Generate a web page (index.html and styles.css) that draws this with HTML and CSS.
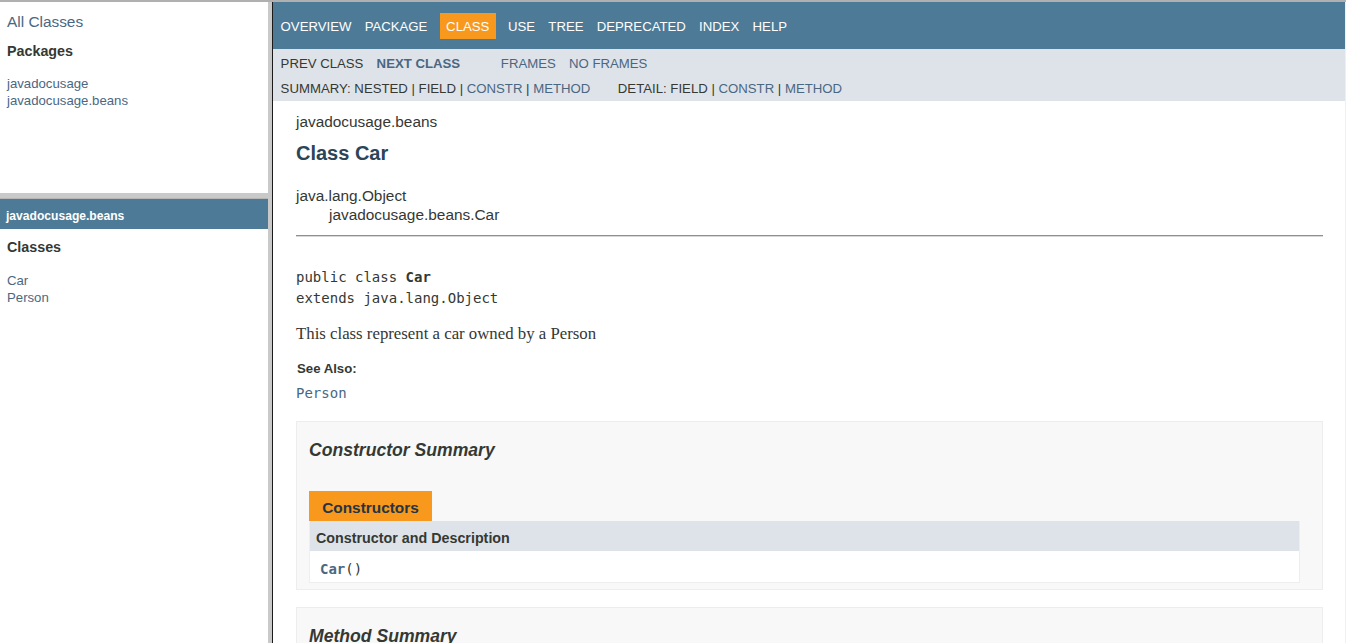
FILE: index.html
```html
<!DOCTYPE html>
<html lang="en">
<head>
<meta charset="utf-8">
<title>Car</title>
<link rel="stylesheet" href="styles.css">
</head>
<body>
<div class="frames">
  <div class="side">
    <div class="pane pane-top">
      <div class="index-header"><a href="#">All&nbsp;Classes</a></div>
      <div class="index-container">
        <h2 class="index-title">Packages</h2>
        <ul class="index-list">
          <li><a href="#">javadocusage</a></li>
          <li><a href="#">javadocusage.beans</a></li>
        </ul>
      </div>
    </div>
    <div class="hsep"></div>
    <div class="pane pane-bottom">
      <h1 class="pkg-bar"><a href="#">javadocusage.beans</a></h1>
      <div class="index-container">
        <h2 class="index-title index-title-classes">Classes</h2>
        <ul class="index-list index-list-classes">
          <li><a href="#">Car</a></li>
          <li><a href="#">Person</a></li>
        </ul>
      </div>
    </div>
  </div>
  <div class="vsep"></div>
  <div class="main">
    <div class="top-nav">
      <ul class="nav-list">
        <li><a href="#">Overview</a></li>
        <li><a href="#">Package</a></li>
        <li class="nav-active">Class</li>
        <li><a href="#">Use</a></li>
        <li><a href="#">Tree</a></li>
        <li><a href="#">Deprecated</a></li>
        <li><a href="#">Index</a></li>
        <li><a href="#">Help</a></li>
      </ul>
    </div>
    <div class="sub-nav">
      <div class="sub-row">
        <ul class="sub-list">
          <li>Prev&nbsp;Class</li>
          <li><a href="#" class="strong">Next&nbsp;Class</a></li>
        </ul>
        <ul class="sub-list">
          <li><a href="#">Frames</a></li>
          <li><a href="#">No&nbsp;Frames</a></li>
        </ul>
      </div>
      <div class="sub-row sub-row-2">
        <ul class="sub-inline">
          <li>Summary:&nbsp;Nested&nbsp;|&nbsp;Field&nbsp;|&nbsp;<a href="#">Constr</a>&nbsp;|&nbsp;<a href="#">Method</a></li>
        </ul>
        <ul class="sub-inline">
          <li>Detail:&nbsp;Field&nbsp;|&nbsp;<a href="#">Constr</a>&nbsp;|&nbsp;<a href="#">Method</a></li>
        </ul>
      </div>
    </div>
    <div class="content">
      <div class="sub-title">javadocusage.beans</div>
      <h1 class="title">Class Car</h1>
      <ul class="inheritance">
        <li>java.lang.Object</li>
        <li class="inherit-child">javadocusage.beans.Car</li>
      </ul>
      <hr class="rule">
      <pre class="signature">public class <b>Car</b>
extends java.lang.Object</pre>
      <div class="block">This class represent a car owned by a Person</div>
      <dl class="see-also">
        <dt>See Also:</dt>
        <dd><a href="#" class="mono">Person</a></dd>
      </dl>
      <section class="summary-block">
        <h3 class="summary-title">Constructor Summary</h3>
        <div class="tab">Constructors</div>
        <div class="member-table">
          <div class="member-head">Constructor and Description</div>
          <div class="member-row"><code class="mono"><a href="#" class="strong">Car</a>()</code></div>
        </div>
      </section>
      <section class="summary-block">
        <h3 class="summary-title">Method Summary</h3>
      </section>
    </div>
  </div>
</div>
</body>
</html>
```

FILE: styles.css
```css
* { box-sizing: border-box; }
html, body {
  margin: 0;
  padding: 0;
  height: 100%;
  overflow: hidden;
  background: #ffffff;
}
body {
  font-family: "Liberation Sans", Arial, sans-serif;
  color: #353833;
  font-size: 15.4px;
  border-top: 2px solid #b0b0b0;
}
a { color: #4A6782; text-decoration: none; }
ul { list-style: none; margin: 0; padding: 0; }

.frames {
  display: flex;
  height: 100%;
}

/* left frames */
.side {
  width: 268px;
  flex: none;
  display: flex;
  flex-direction: column;
}
.pane-top {
  height: 191px;
  flex: none;
  padding-top: 11px;
}
.hsep {
  height: 6px;
  flex: none;
  background: #c9c9c9;
  border-bottom: 1px solid #b5b5b5;
}
.pane-bottom { flex: 1; }
.index-header {
  padding: 0 7px;
  font-size: 15.4px;
  line-height: 18px;
}
.index-container {
  padding: 0 7px;
  font-size: 13.2px;
}
.index-title {
  margin: 11.5px 0 0;
  font-size: 14.3px;
  line-height: 17px;
  font-weight: bold;
  color: #353833;
}
.index-list { margin-top: 15px; }
.index-list li { line-height: 17px; }
.pkg-bar {
  margin: 0;
  height: 30px;
  background: #4D7A97;
  padding: 10px 6px 0;
  font-size: 12.1px;
  line-height: 14px;
  font-weight: bold;
}
.pkg-bar a { color: #ffffff; }
.index-title-classes { margin-top: 9.5px; }
.index-list-classes { margin-top: 16px; }

.vsep {
  width: 4px;
  flex: none;
  background: #c9c9c9;
}

/* main frame */
.main {
  flex: 1;
  min-width: 0;
  border-left: 1px solid #1a1a1a;
  border-right: 1px solid #eef0f2;
}
.top-nav {
  height: 47px;
  background: #4D7A97;
  padding: 11px 0 0 1px;
  font-size: 13.2px;
}
.nav-list { display: flex; }
.nav-list li {
  padding: 5.5px 6.6px;
  line-height: 15px;
  text-transform: uppercase;
  color: #ffffff;
}
.nav-list a { color: #ffffff; }
.nav-list .nav-active {
  background: #F8981D;
  color: #ffffff;
  margin: 0 5.5px;
}
.sub-nav {
  background: #dee3e9;
  font-size: 13.2px;
  text-transform: uppercase;
  padding-left: 1px;
}
.sub-row { display: flex; }
.sub-list {
  display: flex;
  margin-right: 27.5px;
}
.sub-list li {
  padding: 7px 6.6px 4px;
  line-height: 15px;
}
.sub-row-2 {
  padding: 5.5px 0 5.5px 6.6px;
}
.sub-inline {
  margin-right: 27.5px;
  line-height: 15px;
}
.strong { font-weight: bold; }

.content {
  padding: 0 22px 0 23px;
}
.sub-title {
  margin-top: 12px;
  line-height: 18px;
}
.title {
  margin: 9px 0 0;
  font-size: 20px;
  line-height: 26px;
  color: #2c4557;
  font-weight: bold;
}
.inheritance {
  margin-top: 21px;
  line-height: 18px;
}
.inherit-child { padding-top: 1px; padding-left: 33px; }
.rule {
  margin: 11px 0 0;
  height: 2px;
  border: 0;
  border-top: 1px solid #8f8f8f;
  border-bottom: 1px solid #d8d8d8;
}
.signature {
  margin: 29.5px 0 0;
  font-family: "DejaVu Sans Mono", "Liberation Mono", monospace;
  font-size: 14px;
  line-height: 21px;
  color: #353833;
}
.block {
  margin-top: 15.5px;
  font-family: "Liberation Serif", "Times New Roman", serif;
  font-size: 16.8px;
  line-height: 20px;
}
.see-also { margin: 16px 0 0; }
.see-also dt {
  font-size: 13.2px;
  font-weight: bold;
  line-height: 18px;
  padding-left: 1px;
}
.see-also dd {
  margin: 5px 0 0;
  line-height: 20px;
}
.mono {
  font-family: "DejaVu Sans Mono", "Liberation Mono", monospace;
  font-size: 14px;
}
.summary-block {
  margin-top: 18px;
  border: 1px solid #ededed;
  background: #f8f8f8;
  padding: 17px 22px 6px 12px;
}
.summary-block + .summary-block { margin-top: 17px; }
.summary-title {
  margin: 0;
  font-size: 17.6px;
  line-height: 22px;
  font-style: italic;
  font-weight: bold;
  color: #353833;
}
.tab {
  display: inline-block;
  margin-top: 30px;
  height: 30px;
  padding: 8px 13.2px 0;
  background: #F8981D;
  color: #253441;
  font-weight: bold;
  font-size: 15.4px;
  line-height: 18px;
  vertical-align: top;
}
.member-table {
  border-left: 1px solid #eeeeee;
  border-right: 1px solid #eeeeee;
  border-bottom: 1px solid #eeeeee;
}
.member-head {
  height: 30px;
  background: #dee3e9;
  padding: 8.5px 6px 0;
  font-size: 14.3px;
  line-height: 17px;
  font-weight: bold;
  color: #353833;
}
.member-row {
  background: #ffffff;
  padding: 8px 10px 3px;
  line-height: 20px;
}
.member-row code { color: #353833; }
```
